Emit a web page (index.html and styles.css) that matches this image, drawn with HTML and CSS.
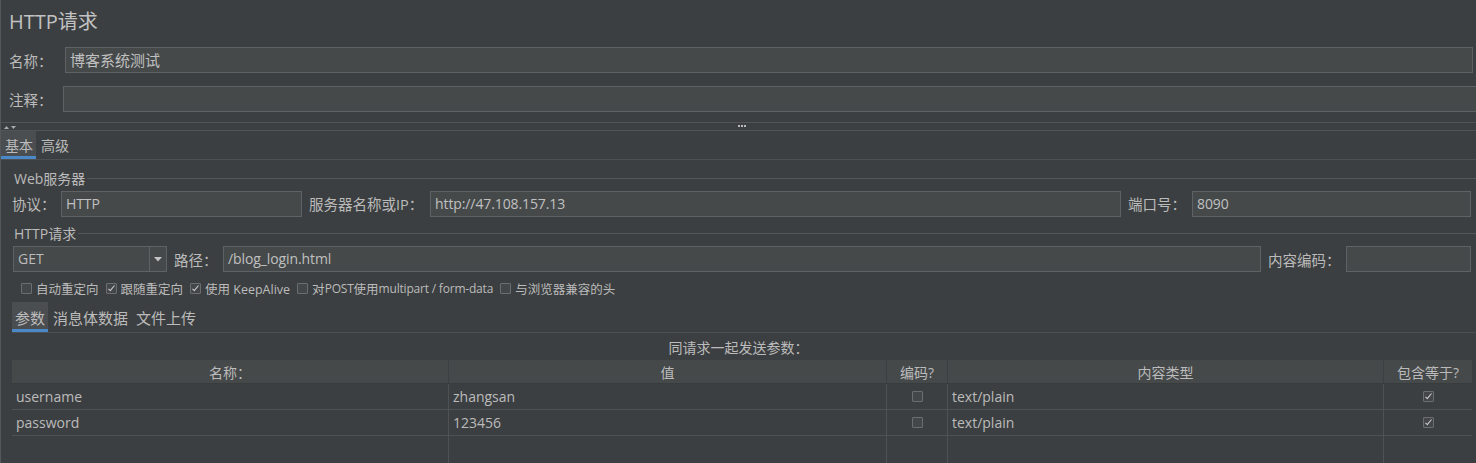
FILE: index.html
```
<!DOCTYPE html>
<html lang="zh-CN">
<head>
    <meta charset="UTF-8">
    <title>HTTP请求</title>
    <link rel="stylesheet" href="styles.css">
</head>
<body>
<div class="page">
    <div class="title">HTTP请求</div>

    <div class="row name-row">
        <span class="label name-label">名称：</span>
        <div class="input grow big">博客系统测试</div>
    </div>
    <div class="row comment-row">
        <span class="label comment-label">注释：</span>
        <div class="input grow"></div>
    </div>

    <div class="splitter">
        <span class="arrows">
            <svg width="14" height="6" viewBox="0 0 14 6"><path d="M1 5 L3.5 2 L6 5 Z" fill="#a9abad"/><path d="M8 2 L13 2 L10.5 5 Z" fill="#a9abad"/></svg>
        </span>
        <span class="grip"><i></i><i></i><i></i></span>
    </div>

    <div class="tabs">
        <span class="tab active">基本</span>
        <span class="tab">高级</span>
    </div>

    <div class="legend"><span>Web服务器</span></div>
    <div class="row server-row">
        <span class="label proto-label">协议：</span>
        <div class="input proto">HTTP</div>
        <span class="label host-label">服务器名称或IP：</span>
        <div class="input grow">http://47.108.157.13</div>
        <span class="label port-label">端口号：</span>
        <div class="input port">8090</div>
    </div>

    <div class="legend second"><span>HTTP请求</span></div>
    <div class="row request-row">
        <div class="select">
            <span class="select-value">GET</span>
            <span class="select-btn"><svg width="8" height="5" viewBox="0 0 8 5"><path d="M0 0 L8 0 L4 4.5 Z" fill="#c4c4c4"/></svg></span>
        </div>
        <span class="label path-label">路径：</span>
        <div class="input grow">/blog_login.html</div>
        <span class="label enc-label">内容编码：</span>
        <div class="input enc"></div>
    </div>

    <div class="checks">
        <span class="check"><i class="box"></i>自动重定向</span>
        <span class="check"><i class="box checked"></i>跟随重定向</span>
        <span class="check"><i class="box checked"></i>使用 KeepAlive</span>
        <span class="check"><i class="box"></i>对<span class="latin">POST</span>使用<span class="latin">multipart / form-data</span></span>
        <span class="check"><i class="box"></i>与浏览器兼容的头</span>
    </div>

    <div class="subtabs">
        <span class="tab active">参数</span>
        <span class="tab">消息体数据</span>
        <span class="tab">文件上传</span>
    </div>

    <div class="caption">同请求一起发送参数：</div>

    <div class="table">
        <div class="tr head">
            <div class="c c-name">名称：</div>
            <div class="c c-value">值</div>
            <div class="c c-enc">编码?</div>
            <div class="c c-type">内容类型</div>
            <div class="c c-eq">包含等于?</div>
        </div>
        <div class="tr">
            <div class="c c-name">username</div>
            <div class="c c-value">zhangsan</div>
            <div class="c c-enc"><i class="box"></i></div>
            <div class="c c-type">text/plain</div>
            <div class="c c-eq"><i class="box checked"></i></div>
        </div>
        <div class="tr">
            <div class="c c-name">password</div>
            <div class="c c-value">123456</div>
            <div class="c c-enc"><i class="box"></i></div>
            <div class="c c-type">text/plain</div>
            <div class="c c-eq"><i class="box checked"></i></div>
        </div>
        <div class="tr empty">
            <div class="c c-name"></div>
            <div class="c c-value"></div>
            <div class="c c-enc"></div>
            <div class="c c-type"></div>
            <div class="c c-eq"></div>
        </div>
    </div>
</div>
</body>
</html>
```

FILE: styles.css
```
html, body {
    margin: 0;
    height: 100%;
    overflow: hidden;
}

body {
    background-color: #3c3f41;
    color: #bbbbbb;
    font-family: "Open Sans", "Noto Sans CJK SC", sans-serif;
    font-size: 14px;
}

.page {
    height: 463px;
    border-left: 1px solid #55585a;
    box-sizing: border-box;
}

.title {
    height: 44px;
    line-height: 44px;
    padding-left: 8px;
    font-size: 20px;
    color: #c2c2c2;
}

.row {
    display: flex;
    align-items: center;
}

.label {
    flex: none;
    white-space: nowrap;
    font-size: 14.5px;
}

.input {
    box-sizing: border-box;
    height: 26px;
    line-height: 24px;
    padding: 0 4px;
    background-color: #45494a;
    border: 1px solid #5f6264;
    color: #c0c0c0;
    white-space: nowrap;
    overflow: hidden;
    letter-spacing: -0.1px;
}

.input.big {
    font-size: 15px;
    letter-spacing: 0;
}

.grow {
    flex: 1;
}

.name-row {
    height: 32px;
    padding-left: 8px;
    padding-right: 3px;
}

.name-label {
    width: 56px;
}

.comment-row {
    height: 46px;
    padding-left: 8px;
}

.comment-label {
    width: 54px;
}

.comment-row .input {
    border-right: none;
}

.splitter {
    height: 7px;
    border-top: 1px solid #515456;
    border-bottom: 1px solid #515456;
    position: relative;
}

.arrows {
    position: absolute;
    left: 2px;
    top: 1px;
    line-height: 0;
}

.grip {
    position: absolute;
    left: 737px;
    top: 2px;
    display: flex;
    gap: 1px;
}

.grip i {
    width: 2px;
    height: 2px;
    background-color: #b9b9b9;
}

.tabs, .subtabs {
    display: flex;
    border-bottom: 1px solid #4d5052;
}

.tabs {
    height: 28px;
}

.tab {
    display: flex;
    align-items: center;
    padding: 0 2px;
    margin-right: 1px;
    font-size: 14px;
    box-sizing: border-box;
}

.tab.active {
    background-color: #4a4e51;
    border-bottom: 3px solid #4a88c7;
    padding-top: 3px;
}

.tabs .tab.active {
    padding-left: 4px;
    padding-right: 3px;
    margin-right: 3px;
}

.legend {
    height: 20px;
    margin-top: 8px;
    display: flex;
    align-items: center;
    padding-left: 13px;
}

.legend.second {
    margin-top: 4px;
}

.legend span {
    padding-right: 2px;
}

.legend::after {
    content: "";
    flex: 1;
    border-top: 1px solid #55585a;
}

.server-row {
    height: 31px;
    padding-left: 11px;
    padding-right: 5px;
}

.proto-label {
    width: 49px;
}

.input.proto {
    width: 241px;
}

.host-label {
    width: 121px;
    margin-left: 7px;
}

.port-label {
    width: 64px;
    margin-left: 7px;
}

.input.port {
    width: 279px;
}

.request-row {
    height: 32px;
    padding-left: 12px;
    padding-right: 5px;
}

.select {
    width: 154px;
    height: 26px;
    box-sizing: border-box;
    border: 1px solid #5f6264;
    background-color: #45494a;
    display: flex;
}

.select-value {
    flex: 1;
    line-height: 24px;
    padding-left: 4px;
}

.select-btn {
    width: 16px;
    border-left: 1px solid #5f6264;
    display: flex;
    align-items: center;
    justify-content: center;
}

.path-label {
    width: 49px;
    margin-left: 7px;
}

.enc-label {
    width: 78px;
    margin-left: 7px;
}

.input.enc {
    width: 125px;
}

.checks {
    display: flex;
    align-items: center;
    height: 26px;
    padding-left: 20px;
    font-size: 12.5px;
}

.check {
    display: flex;
    align-items: center;
    margin-right: 7px;
}

.check .latin {
    font-size: 12px;
    letter-spacing: -0.2px;
}

.check .box {
    margin-right: 4px;
}

.box {
    display: inline-block;
    width: 9px;
    height: 9px;
    border: 1px solid #6b6e70;
    border-radius: 1px;
    background-color: #43474a;
    position: relative;
}

.box.checked::after {
    content: "";
    position: absolute;
    left: 3px;
    top: 0px;
    width: 2px;
    height: 6px;
    border-right: 1.5px solid #d0d0d0;
    border-bottom: 1.5px solid #d0d0d0;
    transform: rotate(40deg);
}

.subtabs {
    height: 30px;
    margin-left: 11px;
    margin-top: 1px;
}

.subtabs .tab {
    font-size: 15px;
}

.subtabs .tab.active {
    padding-left: 3px;
    padding-right: 3px;
    margin-right: 3px;
}

.subtabs .tab + .tab {
    margin-right: 4px;
}

.caption {
    height: 27px;
    line-height: 29px;
    text-align: center;
}

.table {
    margin-left: 11px;
    margin-right: 4px;
}

.tr {
    display: flex;
    height: 26px;
    border-bottom: 1px solid #4f5254;
    box-sizing: border-box;
}

.tr.head {
    height: 24px;
    background-color: #45494a;
    border-bottom: 1px solid #393c3e;
}

.tr.empty {
    height: 30px;
    border-bottom: none;
}

.c {
    box-sizing: border-box;
    border-right: 1px solid #4f5254;
    display: flex;
    align-items: center;
    padding-left: 4px;
    white-space: nowrap;
}

.head .c {
    justify-content: center;
    padding-left: 0;
    border-right: 1px solid #3c3f41;
}

.c-name { width: 437px; }
.c-value { width: 438px; }
.c-enc { width: 61px; justify-content: center; padding-left: 0; }
.c-type { width: 436px; }
.c-eq { flex: 1; justify-content: center; padding-left: 0; border-right: none; }

.head .c-eq {
    border-right: none;
}
```
